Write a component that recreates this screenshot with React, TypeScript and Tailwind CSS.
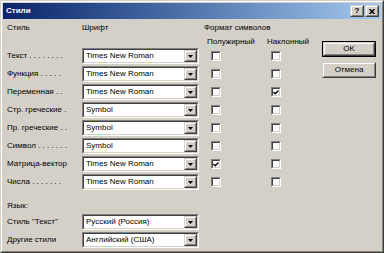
import React from "react";

const font = "font-['Liberation_Sans',Arial,sans-serif]";
const raisedOuter = "border border-t-[#d4d0c8] border-l-[#d4d0c8] border-b-[#404040] border-r-[#404040]";
const raisedInner = "border border-t-white border-l-white border-b-[#808080] border-r-[#808080]";
const sunkenOuter = "border border-t-[#808080] border-l-[#808080] border-b-white border-r-white";
const sunkenInner = "border border-t-[#404040] border-l-[#404040] border-b-[#d4d0c8] border-r-[#d4d0c8]";

const rows: [string, string, boolean, boolean][] = [
    ["Текст . . . . . . . .", "Times New Roman", false, false],
    ["Функция . . . . .", "Times New Roman", false, false],
    ["Переменная . .", "Times New Roman", false, true],
    ["Стр. греческие .", "Symbol", false, false],
    ["Пр. греческие . .", "Symbol", false, false],
    ["Символ . . . . . . .", "Symbol", false, false],
    ["Матрица-вектор", "Times New Roman", true, false],
    ["Числа . . . . . . .", "Times New Roman", false, false],
];

function Combo({ value }: { value: string }) {
    return (
        <div className={`flex h-[16px] w-[117px] ${sunkenOuter}`}>
            <div className={`flex flex-1 items-center bg-white ${sunkenInner}`}>
                <span className="flex-1 overflow-hidden whitespace-nowrap pl-[2px] leading-[12px]">
                    {value}
                </span>
                <div className={`flex h-full w-[13px] bg-[#d4d0c8] ${raisedOuter}`}>
                    <div className={`flex flex-1 items-center justify-center ${raisedInner}`}>
                        <svg width="5" height="3" viewBox="0 0 5 3">
                            <path d="M0 0H5L2.5 3Z" fill="#000" />
                        </svg>
                    </div>
                </div>
            </div>
        </div>
    );
}

function Check({ checked }: { checked: boolean }) {
    return (
        <div className={`flex h-[10px] w-[10px] ${sunkenOuter}`}>
            <div className={`flex flex-1 items-center justify-center bg-white ${sunkenInner}`}>
                {checked && (
                    <svg width="6" height="5" viewBox="0 0 6 5">
                        <path d="M0.5 2L2.2 3.8L5.5 0.5" stroke="#000" strokeWidth="1.3" fill="none" />
                    </svg>
                )}
            </div>
        </div>
    );
}

function Button({ label, isDefault }: { label: string; isDefault?: boolean }) {
    return (
        <div className={`flex h-[16px] w-[54px] ${isDefault ? "border border-black" : ""}`}>
            <div className={`flex flex-1 ${raisedOuter}`}>
                <div className={`flex flex-1 items-center justify-center bg-[#d4d0c8] ${raisedInner}`}>
                    {label}
                </div>
            </div>
        </div>
    );
}

function TitleButton({ children }: { children: React.ReactNode }) {
    return (
        <div className={`flex h-[12px] w-[14px] bg-[#d4d0c8] ${raisedOuter}`}>
            <div className={`flex flex-1 items-center justify-center ${raisedInner}`}>{children}</div>
        </div>
    );
}

export default function App() {
    return (
        <div className={`h-[253px] w-[384px] bg-[#d4d0c8] text-[8px] text-black ${font} ${raisedOuter}`}>
            <div className={`flex h-full flex-col ${raisedInner}`}>
                <div className="mx-[1px] mt-[1px] flex h-[16px] items-center bg-gradient-to-r from-[#0a246a] to-[#a6caf0] pl-[3px] pr-[2px]">
                    <span className="flex-1 text-[8px] font-bold text-white">Стили</span>
                    <div className="flex">
                        <TitleButton>
                            <span className="text-[8px] font-bold leading-none">?</span>
                        </TitleButton>
                        <div className="w-[1px]" />
                        <TitleButton>
                            <svg width="6" height="5" viewBox="0 0 6 5">
                                <path d="M0.5 0L5.5 5M5.5 0L0.5 5" stroke="#000" strokeWidth="1.4" />
                            </svg>
                        </TitleButton>
                    </div>
                </div>
                <div className="flex flex-1">
                    <div className="flex flex-col pl-[4px] pt-[4px]">
                        <div className="grid h-[10px] grid-cols-[76px_117px_120px] items-center leading-[10px]">
                            <span className="pl-[1px]">Стиль</span>
                            <span>Шрифт</span>
                            <span className="pl-[5px]">Формат символов</span>
                        </div>
                        <div className="mt-[4px] grid h-[10px] grid-cols-[76px_117px_60px_60px] items-center leading-[10px]">
                            <span />
                            <span />
                            <span className="pl-[8px]">Полужирный</span>
                            <span className="pl-[8px]">Наклонный</span>
                        </div>
                        <div className="mt-[1px] flex flex-col gap-[2px]">
                            {rows.map(([label, fontName, bold, italic]) => (
                                <div key={label} className="grid h-[16px] grid-cols-[76px_117px_60px_60px] items-center">
                                    <span className="whitespace-nowrap pl-[1px]">{label}</span>
                                    <Combo value={fontName} />
                                    <div className="pl-[12px]">
                                        <Check checked={bold} />
                                    </div>
                                    <div className="pl-[12px]">
                                        <Check checked={italic} />
                                    </div>
                                </div>
                            ))}
                        </div>
                        <div className="mt-[11px] h-[10px] pl-[1px] leading-[10px]">Язык:</div>
                        <div className="mt-[3px] flex flex-col gap-[2px]">
                            <div className="grid h-[16px] grid-cols-[76px_117px] items-center">
                                <span className="pl-[1px]">Стиль "Текст"</span>
                                <Combo value="Русский (Россия)" />
                            </div>
                            <div className="grid h-[16px] grid-cols-[76px_117px] items-center">
                                <span className="pl-[1px]">Другие стили</span>
                                <Combo value="Английский (США)" />
                            </div>
                        </div>
                    </div>
                    <div className="ml-auto mr-[6px] flex flex-col gap-[5px] pt-[22px]">
                        <Button label="OK" isDefault />
                        <Button label="Отмена" />
                    </div>
                </div>
            </div>
        </div>
    );
}
